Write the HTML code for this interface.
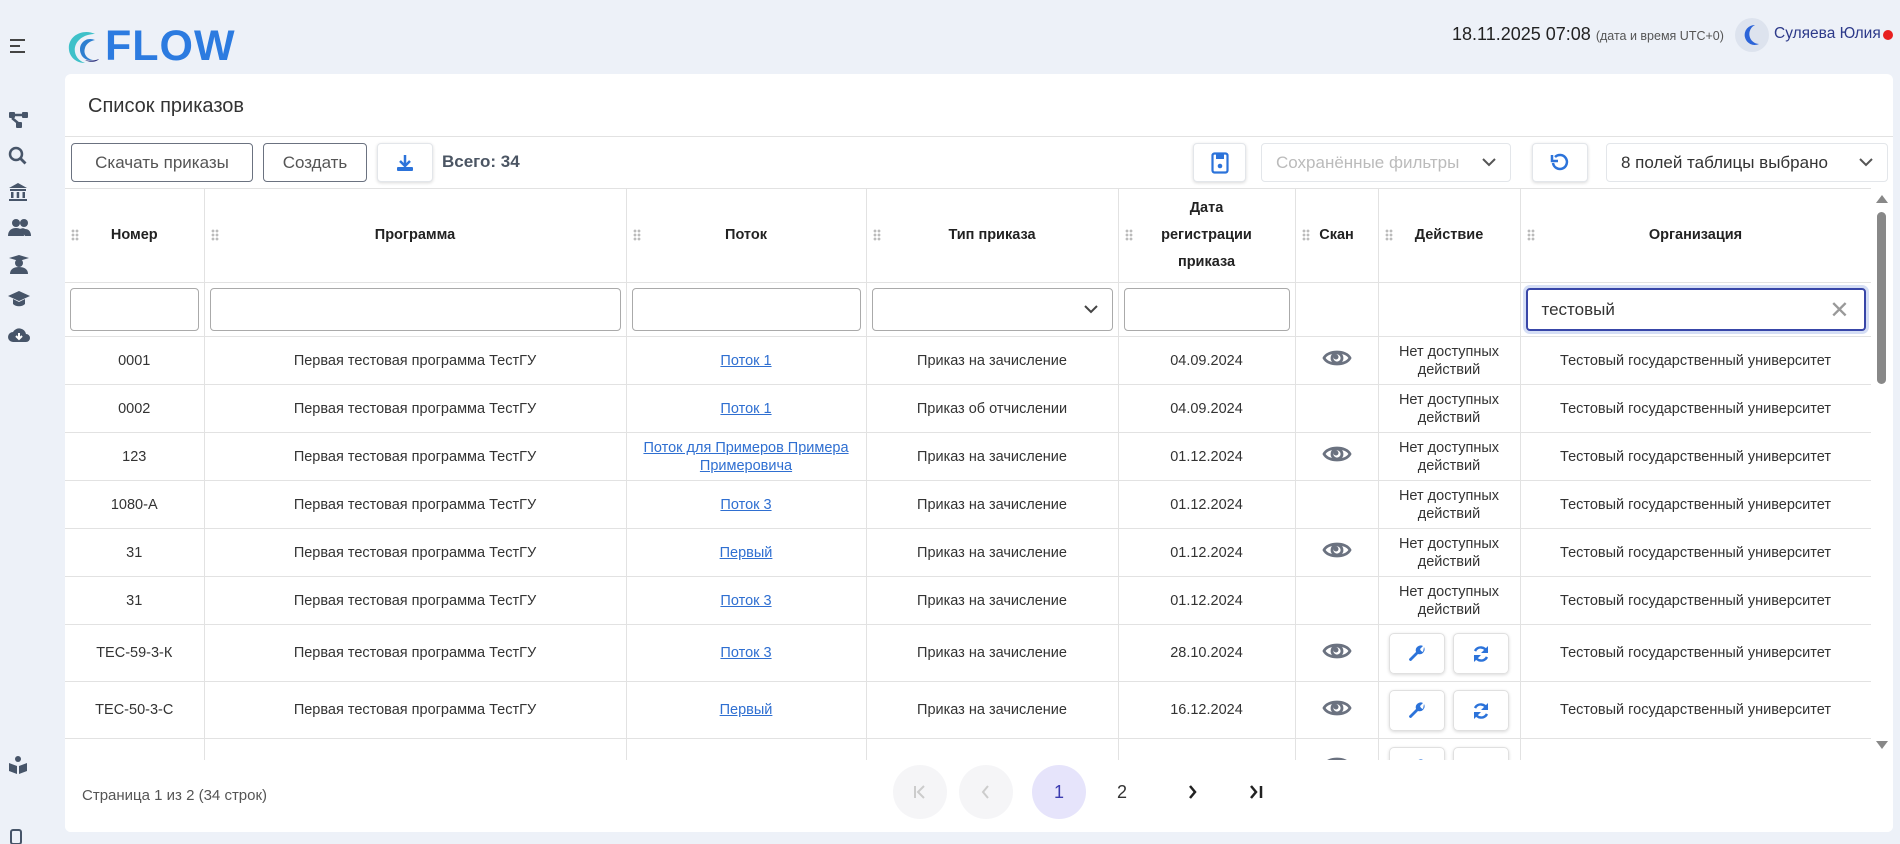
<!DOCTYPE html>
<html><head><meta charset="utf-8"><style>
*{box-sizing:border-box}
body{margin:0;width:1900px;height:842px;background:#edf1f8;font-family:"Liberation Sans","Noto Sans CJK SC",sans-serif;color:#333;position:relative;overflow:hidden}
.abs{position:absolute}
.side svg{position:absolute;left:8px}
.card{position:absolute;left:65px;top:74px;width:1828px;height:758px;background:#fff;border-radius:6px;overflow:hidden}
.btn{position:absolute;top:69px;height:39px;border:1px solid #6b7280;border-radius:4px;font-size:17px;color:#555;display:flex;align-items:center;justify-content:center;background:#fff}
.ibtn{position:absolute;top:69px;height:39px;border:1px solid #e3e6ea;border-radius:4px;box-shadow:0 1px 3px rgba(0,0,0,.15);display:flex;align-items:center;justify-content:center;background:#fff}
.sel{position:absolute;top:69px;height:39px;border:1px solid #e3e6ea;border-radius:4px;font-size:17px;display:flex;align-items:center;padding-left:14px;background:#fff}
table{position:absolute;left:0;top:114px;border-collapse:collapse;table-layout:fixed;width:1806px;font-size:14.5px}
td,th{border:1px solid #e2e2e2;text-align:center;padding:0 4px;position:relative}
th{font-weight:bold;height:94px;font-size:14.5px;line-height:27px;color:#222}
th:first-child,td:first-child{border-left:none}
.grip{position:absolute;left:6px;top:40px;width:8px;height:12px;background-image:radial-gradient(circle,#bbb 1.3px,transparent 1.5px);background-size:4px 4px}
.frow td{height:54px;padding:5px}
.inp{height:43px;border:1px solid #aaa;border-radius:4px;width:100%}
tr.r td{height:48px;line-height:18px}
tr.rb td{height:57px}
a{color:#2f6fd1;text-decoration:underline}
.act{display:inline-block;width:56px;height:41px;border:1px solid #e0e0e0;border-radius:5px;box-shadow:0 1px 3px rgba(0,0,0,.15);vertical-align:middle;margin:0 4px;padding-top:10px}
.pg{position:absolute;top:691px;width:54px;height:54px;border-radius:50%;display:flex;align-items:center;justify-content:center;font-size:18px}
</style></head><body>
<div class="side">
<svg style="top:38px" width="20" height="16" viewBox="0 0 20 16"><path d="M2 2h15M2 8h10M2 14h15" stroke="#444" stroke-width="2"/></svg>
<svg style="top:110px" width="22" height="20" viewBox="0 0 22 20"><rect x="1" y="2" width="6" height="6" rx="1" fill="#475569"/><rect x="14" y="2" width="6" height="6" rx="1" fill="#475569"/><rect x="8" y="12" width="6" height="6" rx="1" fill="#475569"/><path d="M7 5h7M4 8l6 5" stroke="#475569" stroke-width="2.5"/></svg>
<svg style="top:146px" width="20" height="20" viewBox="0 0 20 20"><circle cx="8" cy="8" r="6" fill="none" stroke="#475569" stroke-width="2.5"/><path d="M12.5 12.5l5 5" stroke="#475569" stroke-width="2.8"/></svg>
<svg style="top:182px" width="20" height="20" viewBox="0 0 20 20"><path d="M10 1l9 5H1z M2 7h16v2H2z M3 10h2.5v6H3zM8.7 10h2.5v6H8.7zM14.5 10h2.5v6h-2.5zM1 17h18v2H1z" fill="#475569"/></svg>
<svg style="top:218px" width="24" height="20" viewBox="0 0 24 20"><circle cx="8" cy="5" r="4" fill="#475569"/><circle cx="16" cy="5" r="4" fill="#475569"/><path d="M0 18c0-6 4-8 8-8s8 2 8 8zM12 11c2-1 4-1 5 0 4 0 6 3 6 7h-6z" fill="#475569"/></svg>
<svg style="top:254px" width="22" height="22" viewBox="0 0 22 22"><path d="M1 4l10-3 10 3-10 3z" fill="#475569"/><circle cx="11" cy="9" r="4" fill="#475569"/><path d="M2 20c0-5 4-7 9-7s9 2 9 7z" fill="#475569"/></svg>
<svg style="top:290px" width="22" height="18" viewBox="0 0 22 18"><path d="M11 1l11 5-11 5L0 6z M5 9v5c3 3 9 3 12 0V9l-6 3z" fill="#475569"/></svg>
<svg style="top:326px" width="22" height="18" viewBox="0 0 22 18"><path d="M5 16a5 5 0 0 1 0-10 7 7 0 0 1 13 2 4 4 0 0 1 0 8z" fill="#475569"/><path d="M11 7v6M8 10l3 3 3-3" stroke="#fff" stroke-width="2" fill="none"/></svg>
<svg style="top:755px" width="20" height="20" viewBox="0 0 20 20"><circle cx="10" cy="4" r="3" fill="#475569"/><path d="M1 8l8 3v8l-8-3zM19 8l-8 3v8l8-3z" fill="#475569"/></svg>
<svg style="top:828px" width="16" height="16" viewBox="0 0 16 16"><rect x="3" y="2" width="10" height="14" rx="2" fill="none" stroke="#475569" stroke-width="2"/></svg>
</div>
<svg class="abs" style="left:65px;top:30px" width="48" height="34" viewBox="0 0 48 34"><path d="M30 4C18-2 2 6 4 20c1 8 8 13 16 13C10 30 6 18 14 10c5-5 12-6 16-6z" fill="#3ec1c9"/><path d="M30 10C21 6 12 14 16 24c2 5 7 7 12 6-6-1-10-6-8-12 1-4 5-7 10-8z" fill="#2d7fd0"/><path d="M20 30c5 3 12 2 14-1-5 2-10 2-14 1z" fill="#2b2f7a"/></svg>
<div class="abs" style="left:105px;top:22px;font-size:43px;font-weight:bold;color:#2c7be0;letter-spacing:1px">FLOW</div>
<div class="abs" style="left:1452px;top:24px;font-size:18px;color:#222">18.11.2025 07:08 <span style="font-size:12.5px;color:#555">(дата и время UTC+0)</span></div>
<div class="abs" style="left:1735px;top:18px;width:34px;height:34px;border-radius:50%;background:#dde3ee"></div>
<svg class="abs" style="left:1743px;top:24px" width="18" height="22" viewBox="0 0 18 22"><path d="M12 1a10 10 0 1 0 4 19A10 10 0 0 1 12 1z" fill="#2c64d8"/></svg>
<div class="abs" style="left:1774px;top:25px;font-size:15.5px;color:#2d3a8a">Суляева Юлия</div>
<div class="abs" style="left:1883px;top:30px;width:10px;height:10px;border-radius:50%;background:#e82020"></div>

<div class="card">
<div class="abs" style="left:23px;top:21px;font-size:20px;color:#333">Список приказов</div>
<div class="abs" style="left:0;top:62px;width:1828px;height:1px;background:#e2e2e2"></div>
<div class="btn" style="left:6px;width:182px">Скачать приказы</div>
<div class="btn" style="left:198px;width:104px">Создать</div>
<div class="ibtn" style="left:312px;width:56px"><svg width="20" height="20" viewBox="0 0 20 20"><path d="M10 2v10M5 8l5 5 5-5" stroke="#2c73da" stroke-width="2.5" fill="none"/><rect x="2" y="14" width="16" height="4" rx="1" fill="#2c73da"/></svg></div>
<div class="abs" style="left:377px;top:78px;font-size:17px;font-weight:bold;color:#4b5563">Всего: 34</div>
<div class="ibtn" style="left:1128px;width:53px"><svg width="18" height="22" viewBox="0 0 18 22"><rect x="1.5" y="1.5" width="15" height="19" rx="2" fill="none" stroke="#2c73da" stroke-width="2.2"/><rect x="5" y="2" width="8" height="5" fill="#2c73da"/><circle cx="9" cy="14" r="2.3" fill="#2c73da"/></svg></div>
<div class="sel" style="left:1196px;width:250px;color:#bbb">Сохранённые фильтры<svg style="position:absolute;right:14px" width="14" height="9" viewBox="0 0 14 9"><path d="M1 1l6 6 6-6" stroke="#555" stroke-width="2" fill="none"/></svg></div>
<div class="ibtn" style="left:1467px;width:56px"><svg width="20" height="20" viewBox="0 0 20 20"><path d="M5 4a7 7 0 1 1-2 6" stroke="#2c73da" stroke-width="2.5" fill="none"/><path d="M2 2v6h6" fill="none" stroke="#2c73da" stroke-width="2.5"/></svg></div>
<div class="sel" style="left:1541px;width:282px;color:#333">8 полей таблицы выбрано<svg style="position:absolute;right:14px" width="14" height="9" viewBox="0 0 14 9"><path d="M1 1l6 6 6-6" stroke="#555" stroke-width="2" fill="none"/></svg></div>

<table>
<colgroup><col style="width:139px"><col style="width:422px"><col style="width:240px"><col style="width:252px"><col style="width:177px"><col style="width:83px"><col style="width:142px"><col style="width:351px"></colgroup>
<tr><th><span class="grip"></span>Номер</th><th><span class="grip"></span>Программа</th><th><span class="grip"></span>Поток</th><th><span class="grip"></span>Тип приказа</th><th><span class="grip"></span>Дата<br>регистрации<br>приказа</th><th><span class="grip"></span>Скан</th><th><span class="grip"></span>Действие</th><th><span class="grip"></span>Организация</th></tr>
<tr class="frow"><td><div class="inp"></div></td><td><div class="inp"></div></td><td><div class="inp"></div></td><td><div class="inp" style="position:relative"><svg style="position:absolute;right:14px;top:16px" width="14" height="9" viewBox="0 0 14 9"><path d="M1 1l6 6 6-6" stroke="#444" stroke-width="2" fill="none"/></svg></div></td><td><div class="inp"></div></td><td></td><td></td><td><div class="inp" style="border:2px solid #3846a8;box-shadow:0 0 0 3px #d5def5;text-align:left;padding:10px 14px;font-size:17px;position:relative">тестовый<span style="position:absolute;right:14px;top:6px;font-size:24px;color:#999">✕</span></div></td></tr>
<tr class="r"><td>0001</td><td>Первая тестовая программа ТестГУ</td><td><a>Поток 1</a></td><td>Приказ на зачисление</td><td>04.09.2024</td><td>EYE</td><td>Нет доступных<br>действий</td><td>Тестовый государственный университет</td></tr>
<tr class="r"><td>0002</td><td>Первая тестовая программа ТестГУ</td><td><a>Поток 1</a></td><td>Приказ об отчислении</td><td>04.09.2024</td><td></td><td>Нет доступных<br>действий</td><td>Тестовый государственный университет</td></tr>
<tr class="r"><td>123</td><td>Первая тестовая программа ТестГУ</td><td><a>Поток для Примеров Примера<br>Примеровича</a></td><td>Приказ на зачисление</td><td>01.12.2024</td><td>EYE</td><td>Нет доступных<br>действий</td><td>Тестовый государственный университет</td></tr>
<tr class="r"><td>1080-А</td><td>Первая тестовая программа ТестГУ</td><td><a>Поток 3</a></td><td>Приказ на зачисление</td><td>01.12.2024</td><td></td><td>Нет доступных<br>действий</td><td>Тестовый государственный университет</td></tr>
<tr class="r"><td>31</td><td>Первая тестовая программа ТестГУ</td><td><a>Первый</a></td><td>Приказ на зачисление</td><td>01.12.2024</td><td>EYE</td><td>Нет доступных<br>действий</td><td>Тестовый государственный университет</td></tr>
<tr class="r"><td>31</td><td>Первая тестовая программа ТестГУ</td><td><a>Поток 3</a></td><td>Приказ на зачисление</td><td>01.12.2024</td><td></td><td>Нет доступных<br>действий</td><td>Тестовый государственный университет</td></tr>
<tr class="r rb"><td>ТЕС-59-3-К</td><td>Первая тестовая программа ТестГУ</td><td><a>Поток 3</a></td><td>Приказ на зачисление</td><td>28.10.2024</td><td>EYE</td><td>ACT</td><td>Тестовый государственный университет</td></tr>
<tr class="r rb"><td>ТЕС-50-3-С</td><td>Первая тестовая программа ТестГУ</td><td><a>Первый</a></td><td>Приказ на зачисление</td><td>16.12.2024</td><td>EYE</td><td>ACT</td><td>Тестовый государственный университет</td></tr>
<tr class="r rb"><td>ТЕС-00-3-К</td><td>Первая тестовая программа ТестГУ</td><td><a>Первый</a></td><td>Приказ на зачисление</td><td>24.01.2025</td><td>EYE</td><td>ACT</td><td>Тестовый государственный университет</td></tr>
</table>
<div class="abs" style="left:1806px;top:114px;width:22px;height:572px;background:#fff"></div>
<svg class="abs" style="left:1810px;top:120px" width="14" height="10"><path d="M1 9l6-8 6 8z" fill="#888"/></svg>
<div class="abs" style="left:1812px;top:138px;width:9px;height:172px;border-radius:5px;background:#888"></div>
<svg class="abs" style="left:1810px;top:666px" width="14" height="10"><path d="M1 1l6 8 6-8z" fill="#888"/></svg>
<div class="abs" style="left:0;top:686px;width:1828px;height:72px;background:#fff"></div>
<div class="abs" style="left:17px;top:713px;font-size:15px;color:#555">Страница 1 из 2 (34 строк)</div>
<div class="pg" style="left:828px;background:#f5f5f7"><svg width="16" height="16" viewBox="0 0 16 16"><path d="M3 2v12M12 2L6 8l6 6" stroke="#ccc" stroke-width="2" fill="none"/></svg></div>
<div class="pg" style="left:894px;background:#f5f5f7"><svg width="16" height="16" viewBox="0 0 16 16"><path d="M10 2L5 8l5 6" stroke="#ccc" stroke-width="2" fill="none"/></svg></div>
<div class="pg" style="left:967px;background:#e6e4fb;color:#3b3bb0">1</div>
<div class="pg" style="left:1030px;color:#333">2</div>
<div class="pg" style="left:1100px"><svg width="16" height="16" viewBox="0 0 16 16"><path d="M6 2l5 6-5 6" stroke="#222" stroke-width="2.5" fill="none"/></svg></div>
<div class="pg" style="left:1164px"><svg width="18" height="16" viewBox="0 0 18 16"><path d="M4 2l5 6-5 6M14 2v12" stroke="#222" stroke-width="2.5" fill="none"/></svg></div>
</div>
<script>
var eye='<svg width="30" height="24" viewBox="0 0 30 24"><path d="M2 12C6 4 24 4 28 12C24 20 6 20 2 12z" fill="none" stroke="#6b7280" stroke-width="2.8"/><circle cx="15" cy="12" r="5" fill="none" stroke="#6b7280" stroke-width="2.8"/><circle cx="14" cy="11" r="2.5" fill="#6b7280"/></svg>';
var act='<span class="act"><svg width="20" height="20" viewBox="0 0 20 20"><path d="M17 3a5 5 0 0 1-6 7L4 17a2 2 0 0 1-2-2l7-7a5 5 0 0 1 7-6l-3 3 1 2 2 1z" fill="#2c73da"/></svg></span><span class="act"><svg width="20" height="20" viewBox="0 0 20 20"><path d="M16 8A6.5 6.5 0 0 0 4 7M4 12a6.5 6.5 0 0 0 12 1" stroke="#2c73da" stroke-width="2.5" fill="none"/><path d="M17 2v7h-7zM3 18v-7h7z" fill="#2c73da"/></svg></span>';
document.querySelectorAll('td').forEach(function(t){if(t.textContent==='EYE')t.innerHTML=eye;if(t.textContent==='ACT')t.innerHTML=act;});
</script>
</body></html>
